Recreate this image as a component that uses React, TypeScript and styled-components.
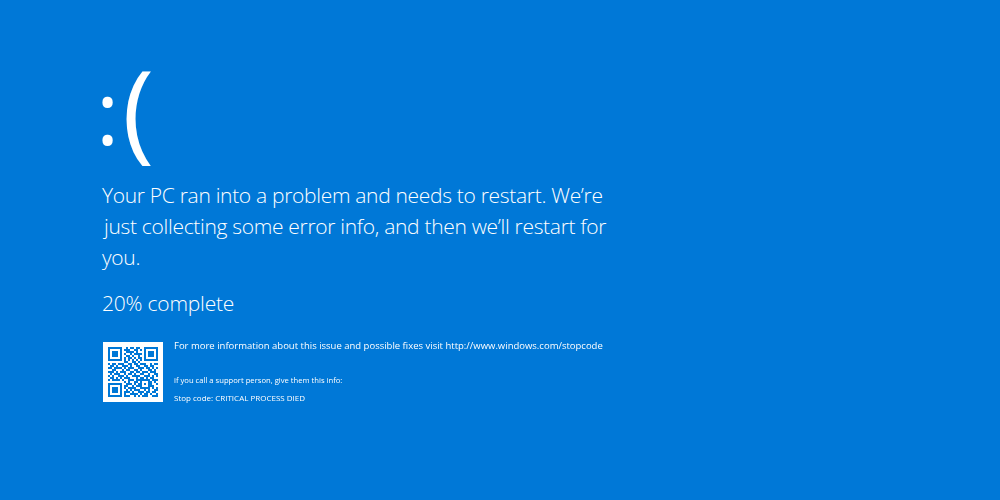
import * as React from "react";
import styled, { createGlobalStyle } from "styled-components";

const GlobalStyle = createGlobalStyle`
  html, body {
    margin: 0;
    padding: 0;
    background: #0078d7;
  }
`;

const Screen = styled.main`
  width: 1000px;
  height: 500px;
  box-sizing: border-box;
  padding: 40px 0 0 102px;
  background: #0078d7;
  color: #fff;
  font-family: "Open Sans", "Liberation Sans", sans-serif;
  font-weight: 300;
  overflow: hidden;
`;

const Face = styled.div`
  display: flex;
  align-items: flex-start;
  height: 140px;
  margin-left: -6px;
`;

const Colon = styled.span`
  font-size: 88px;
  line-height: 142px;
  font-weight: 500;
`;

const Paren = styled.span`
  font-size: 108px;
  line-height: 135px;
  font-weight: 400;
  margin-left: 3px;
`;

const Message = styled.p`
  width: 540px;
  margin: 0;
  font-size: 21px;
  line-height: 31px;
  font-weight: 350;
  letter-spacing: -0.31px;
  white-space: nowrap;
`;

const Indented = styled.span`
  display: block;
  padding-left: 2px;
`;

const Progress = styled.p`
  margin: 16px 0 0;
  font-size: 21px;
  line-height: 28px;
  font-weight: 350;
  letter-spacing: -0.2px;
`;

const Details = styled.section`
  display: flex;
  gap: 11px;
  margin: 25px 0 0 1px;
`;

const QrBox = styled.svg`
  display: block;
  width: 60px;
  height: 60px;
  flex: none;
  filter: blur(0.35px);
`;

const Info = styled.div`
  display: flex;
  flex-direction: column;
  font-weight: 400;
  filter: blur(0.3px);
  white-space: nowrap;
`;

const InfoLine = styled.span<{ $top: number; $size: number }>`
  margin-top: ${(p) => p.$top}px;
  font-size: ${(p) => p.$size}px;
  line-height: 11px;
`;

const QR_ROWS = [
  "1111111001011011001111111",
  "1000001011100110101000001",
  "1011101001111010001011101",
  "1011101010010111101011101",
  "1011101001101001001011101",
  "1000001010110101101000001",
  "1111111010101010101111111",
  "0000000011001101000000000",
  "1011011100110110111001011",
  "0110100111010011001101100",
  "1101111010111001110110101",
  "0011000101100110100011010",
  "1110101110011011011101110",
  "0101110010110100110010011",
  "1010011101001111001110101",
  "0110101011100010110101100",
  "1011110100111011111110111",
  "0000000010100110100011010",
  "1111111001110101101011001",
  "1000001011001011100011100",
  "1011101010111100111110101",
  "1011101001010111001010011",
  "1011101011101001110110110",
  "1000001010011110101101001",
  "1111111011100101011100111",
];

const QrCode = () => (
  <QrBox viewBox="-2.5 -2.5 30 30">
    <rect x={-2.5} y={-2.5} width={30} height={30} fill="#fff" />
    {QR_ROWS.flatMap((row, y) =>
      row.split("").map((cell, x) =>
        cell === "1" ? <rect key={`${x}-${y}`} x={x} y={y} width={1} height={1} fill="#0078d7" /> : null
      )
    )}
  </QrBox>
);

export default function App() {
  return (
    <>
      <GlobalStyle />
      <Screen>
        <Face>
          <Colon>:</Colon>
          <Paren>(</Paren>
        </Face>
        <Message>
          Your PC ran into a problem and needs to restart. We’re
          <Indented>just collecting some error info, and then we’ll restart for</Indented>
          you.
        </Message>
        <Progress>20% complete</Progress>
        <Details>
          <QrCode />
          <Info>
            <InfoLine $top={-2} $size={9.5}>
              For more information about this issue and possible fixes visit http://www.windows.com/stopcode
            </InfoLine>
            <InfoLine $top={24} $size={7.65}>if you call a support person, give them this info:</InfoLine>
            <InfoLine $top={6} $size={8}>Stop code: CRITICAL PROCESS DIED</InfoLine>
          </Info>
        </Details>
      </Screen>
    </>
  );
}
